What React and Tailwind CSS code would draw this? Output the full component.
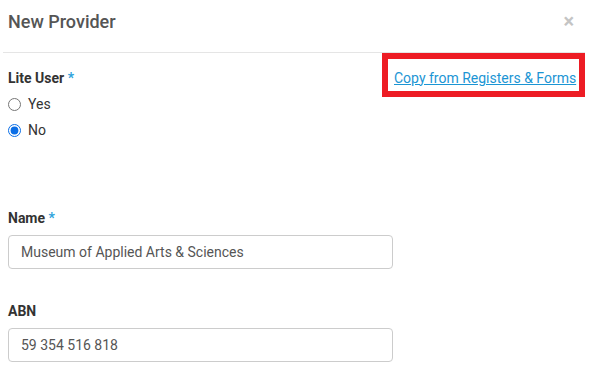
import React, { useState } from "react";

const font = { fontFamily: "Roboto, 'Liberation Sans', sans-serif" };

const App = () => {
  const [lite, setLite] = useState("no");

  return (
    <div className="w-[604px] h-[380px] bg-white overflow-hidden text-[#333]" style={font}>
      {/* Header */}
      <div className="ml-[3px] w-[582px] h-[53px] flex items-center justify-between border-b border-[#e5e5e5] pl-[5px] pr-[11px]">
        <h2 className="text-[18px] font-medium text-[#555] -mt-[10px]">New Provider</h2>
        <button className="text-[20px] leading-none font-bold text-[#c4c4c4] -mt-[11px]">×</button>
      </div>

      <div className="px-[8px]">
        {/* Lite user row */}
        <div className="flex justify-between">
          <div className="pt-[15px]">
            <label className="block text-[14px] leading-[20px] font-bold text-[#333]">
              Lite User <span className="text-[#2ea3dc]">*</span>
            </label>
            <div className="mt-[6px] flex flex-col gap-[6px]">
              {[
                ["yes", "Yes"],
                ["no", "No"],
              ].map(([value, text]) => (
                <label key={value} className="flex items-center h-[20px] text-[14px] text-[#333] cursor-pointer">
                  <input
                    type="radio"
                    name="lite"
                    checked={lite === value}
                    onChange={() => setLite(value)}
                    className="m-0 w-[13px] h-[13px] accent-[#0a6ee6]"
                  />
                  <span className="ml-[7px]">{text}</span>
                </label>
              ))}
            </div>
          </div>
          <div className="mr-[11px] w-[203px] h-[44px] border-[6px] border-[#ed1c24] flex items-center pl-[6px] pt-[6px]">
            <a href="#" className="text-[14px] text-[#1b95d4] underline">
              Copy from Registers &amp; Forms
            </a>
          </div>
        </div>

        {/* Name */}
        <label className="block mt-[68px] text-[14px] leading-[20px] font-bold text-[#333]">
          Name <span className="text-[#2ea3dc]">*</span>
        </label>
        <input
          type="text"
          defaultValue="Museum of Applied Arts & Sciences"
          className="mt-[7px] block w-[385px] h-[34px] border border-[#cccccc] rounded-[4px] pl-[12px] text-[14px] text-[#555] outline-none"
        />

        {/* ABN */}
        <label className="block mt-[32px] text-[14px] leading-[20px] font-bold text-[#333]">ABN</label>
        <input
          type="text"
          defaultValue="59 354 516 818"
          className="mt-[7px] block w-[385px] h-[34px] border border-[#cccccc] rounded-[4px] pl-[12px] text-[14px] text-[#555] outline-none"
        />
      </div>
    </div>
  );
};

export default App;
